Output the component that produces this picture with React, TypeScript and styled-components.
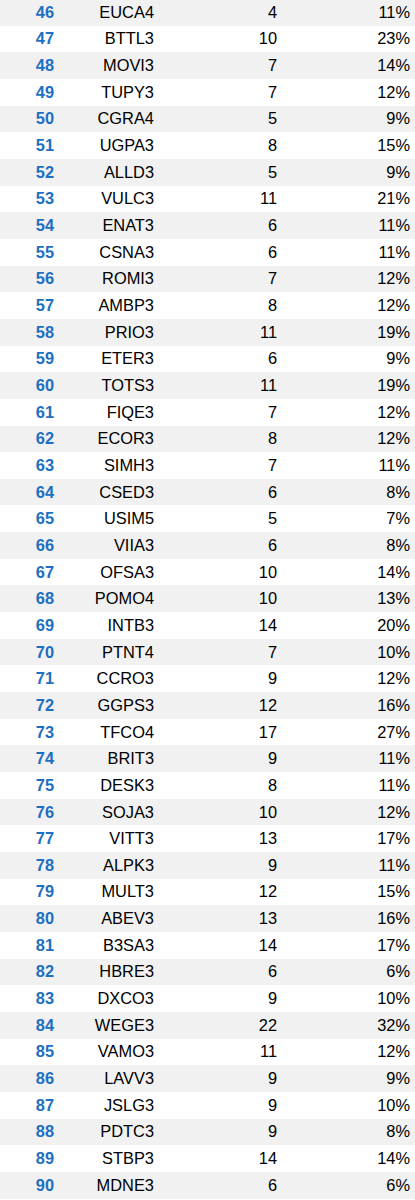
import styled, { createGlobalStyle } from 'styled-components';

const rows: [string, number, number][] = [
  ['EUCA4', 4, 11],
  ['BTTL3', 10, 23],
  ['MOVI3', 7, 14],
  ['TUPY3', 7, 12],
  ['CGRA4', 5, 9],
  ['UGPA3', 8, 15],
  ['ALLD3', 5, 9],
  ['VULC3', 11, 21],
  ['ENAT3', 6, 11],
  ['CSNA3', 6, 11],
  ['ROMI3', 7, 12],
  ['AMBP3', 8, 12],
  ['PRIO3', 11, 19],
  ['ETER3', 6, 9],
  ['TOTS3', 11, 19],
  ['FIQE3', 7, 12],
  ['ECOR3', 8, 12],
  ['SIMH3', 7, 11],
  ['CSED3', 6, 8],
  ['USIM5', 5, 7],
  ['VIIA3', 6, 8],
  ['OFSA3', 10, 14],
  ['POMO4', 10, 13],
  ['INTB3', 14, 20],
  ['PTNT4', 7, 10],
  ['CCRO3', 9, 12],
  ['GGPS3', 12, 16],
  ['TFCO4', 17, 27],
  ['BRIT3', 9, 11],
  ['DESK3', 8, 11],
  ['SOJA3', 10, 12],
  ['VITT3', 13, 17],
  ['ALPK3', 9, 11],
  ['MULT3', 12, 15],
  ['ABEV3', 13, 16],
  ['B3SA3', 14, 17],
  ['HBRE3', 6, 6],
  ['DXCO3', 9, 10],
  ['WEGE3', 22, 32],
  ['VAMO3', 11, 12],
  ['LAVV3', 9, 9],
  ['JSLG3', 9, 10],
  ['PDTC3', 9, 8],
  ['STBP3', 14, 14],
  ['MDNE3', 6, 6],
];

const GlobalStyle = createGlobalStyle`
  body {
    margin: 0;
    background: #fff;
    font-family: "Liberation Sans", Arial, sans-serif;
  }
`;

const Table = styled.div`
  width: 415px;
  margin-top: -1px;
`;

const Row = styled.div<{ $shaded: boolean }>`
  display: grid;
  grid-template-columns: 54px 100px 123px 133px;
  height: 26.67px;
  align-items: center;
  background: ${(p) => (p.$shaded ? '#f1f1f1' : '#ffffff')};
  font-size: 16.4px;
  color: #000;
`;

const Rank = styled.span`
  text-align: right;
  font-weight: 700;
  color: #1c6fc2;
`;

const Cell = styled.span`
  text-align: right;
`;

export default function App() {
  return (
    <>
      <GlobalStyle />
      <Table>
        {rows.map(([ticker, count, pct], i) => (
          <Row key={ticker} $shaded={i % 2 === 0}>
            <Rank>{46 + i}</Rank>
            <Cell>{ticker}</Cell>
            <Cell>{count}</Cell>
            <Cell>{pct}%</Cell>
          </Row>
        ))}
      </Table>
    </>
  );
}
